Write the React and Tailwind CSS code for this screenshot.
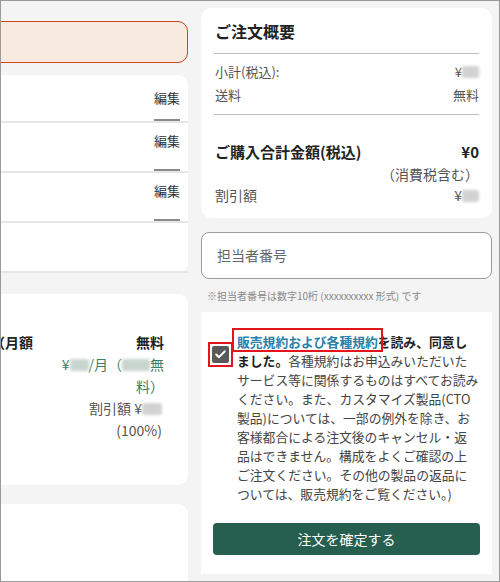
import React from 'react';
import { Check } from 'lucide-react';

const Blur = ({ w = 20, tint = 'bg-[#d2d2d2]' }) => (
    <span className={`inline-block h-[12px] align-[-1px] rounded-[2px] blur-[1.5px] ${tint}`} style={{ width: w }} />
);

const EditRow = ({ h, pt, edit = true }) => (
    <div className={`flex justify-end pr-[8px] border-b-2 border-[#e6e6e6] ${h} ${pt}`}>
        {edit && (
            <span className="inline-block text-[13px] leading-[16px] text-[#333] border-b-2 border-[#8a8a8a] pb-[1px]">
                編集
            </span>
        )}
    </div>
);

const termLines = [
    'サービス等に関係するものはすべてお読み',
    'ください。また、カスタマイズ製品(CTO',
    '製品)については、一部の例外を除き、お',
    '客様都合による注文後のキャンセル・返',
    '品はできません。構成をよくご確認の上',
    'ご注文ください。その他の製品の返品に',
    'ついては、販売規約をご覧ください。)',
];

export default function App() {
    return (
        <div className="w-[500px] h-[582px] border border-[#9a9a9a] bg-[#f4f4f4] overflow-hidden flex font-['Noto_Sans_CJK_JP','Noto_Sans',sans-serif] text-[#333]">
            {/* left column, clipped on the left */}
            <div className="w-[207px] -ml-[20px] shrink-0 flex flex-col">
                <div className="mt-[20px] h-[42px] shrink-0 rounded-[10px] border-[1.5px] border-[#c9471a] bg-[#f8eadf]" />

                <div className="mt-[12px] shrink-0 bg-white rounded-[10px]">
                    <EditRow h="h-[48px]" pt="pt-[15px]" />
                    <EditRow h="h-[50px]" pt="pt-[10px]" />
                    <EditRow h="h-[50px]" pt="pt-[10px]" />
                    <EditRow h="h-[50px]" pt="pt-0" edit={false} />
                </div>

                <div className="mt-[21px] h-[191px] shrink-0 bg-white rounded-[10px] flex justify-between pt-[37px] pr-[24px] text-[14px] leading-[22px]">
                    <div className="font-bold text-[#222] ml-[10px]">（月額</div>
                    <div className="flex flex-col items-end text-right">
                        <div className="font-bold text-[#222]">無料</div>
                        <div className="text-[#3d7f64] whitespace-nowrap">
                            ¥<Blur w={19} tint="bg-[#c9d6d0]" />/月（<Blur w={28} tint="bg-[#c9d6d0]" />無
                        </div>
                        <div className="text-[#3d7f64]">料）</div>
                        <div className="text-[#555] whitespace-nowrap pr-[2px]">
                            割引額 ¥<Blur w={20} />
                        </div>
                        <div className="text-[#555] pr-[2px]">(100%)</div>
                    </div>
                </div>

                <div className="mt-[19px] h-[120px] shrink-0 bg-white rounded-[10px]" />
            </div>

            {/* right column */}
            <div className="ml-[13px] w-[291px] shrink-0 flex flex-col pt-[7px]">
                <div className="shrink-0 bg-white rounded-[10px] px-[13px] pt-[12px] pb-[13px]">
                    <div className="text-[16px] leading-[22px] font-bold text-[#222] pl-[1px]">ご注文概要</div>
                    <div className="mt-[11px] border-t border-[#bdbdbd]" />
                    <div className="mt-[6px] text-[13px] leading-[23px] text-[#555]">
                        <div className="flex justify-between pl-[1px]">
                            <span>小計(税込):</span>
                            <span>¥<Blur w={17} /></span>
                        </div>
                        <div className="flex justify-between pl-[1px]">
                            <span>送料</span>
                            <span>無料</span>
                        </div>
                    </div>
                    <div className="mt-[8px] border-t border-[#bdbdbd]" />
                    <div className="mt-[26px] flex justify-between text-[15px] leading-[22px] font-bold text-[#222] pl-[1px]">
                        <span>ご購入合計金額(税込)</span>
                        <span>¥0</span>
                    </div>
                    <div className="text-right text-[14px] leading-[22px] text-[#555]">（消費税含む）</div>
                    <div className="flex justify-between text-[14px] leading-[20px] text-[#555] pl-[1px]">
                        <span>割引額</span>
                        <span>¥<Blur w={17} /></span>
                    </div>
                </div>

                <div className="mt-[14px] h-[47px] shrink-0 rounded-[8px] border border-[#9c9c9c] bg-white flex items-center pl-[15px] text-[14px] text-[#666]">
                    担当者番号
                </div>

                <div className="mt-[11px] shrink-0 pl-[6px] text-[10px] leading-[12px] text-[#888]">
                    ※担当者番号は数字10桁 (xxxxxxxxxx 形式) です
                </div>

                <div className="mt-[10px] shrink-0 bg-white px-[12px] pt-[20px] pb-[19px]">
                    <div className="flex">
                        <div className="relative mt-[14px] ml-[-1px] w-[17px] h-[17px] shrink-0 rounded-[2px] bg-[#5a5a5a] flex items-center justify-center">
                            <Check size={13} strokeWidth={3.5} color="#fff" />
                            <div className="absolute -inset-[4px] border-2 border-[#e5141c]" />
                        </div>
                        <div className="ml-[8px] text-[12.8px] leading-[19px] text-[#444] whitespace-nowrap">
                            <div className="font-bold text-[#222]">
                                <span className="relative text-[#2a7fa8]">
                                    販売規約および各種規約
                                    <span className="absolute -left-[5px] -right-[5px] -top-[4px] -bottom-[1px] border-2 border-[#e5141c]" />
                                </span>
                                を読み、同意し
                            </div>
                            <div>
                                <span className="font-bold text-[#222]">ました。</span>各種規約はお申込みいただいた
                            </div>
                            {termLines.map((line) => (
                                <div key={line}>{line}</div>
                            ))}
                        </div>
                    </div>
                    <button className="mt-[20px] w-full h-[32px] rounded-[4px] bg-[#265e4f] text-white text-[14px]">
                        注文を確定する
                    </button>
                </div>
            </div>
        </div>
    );
}
